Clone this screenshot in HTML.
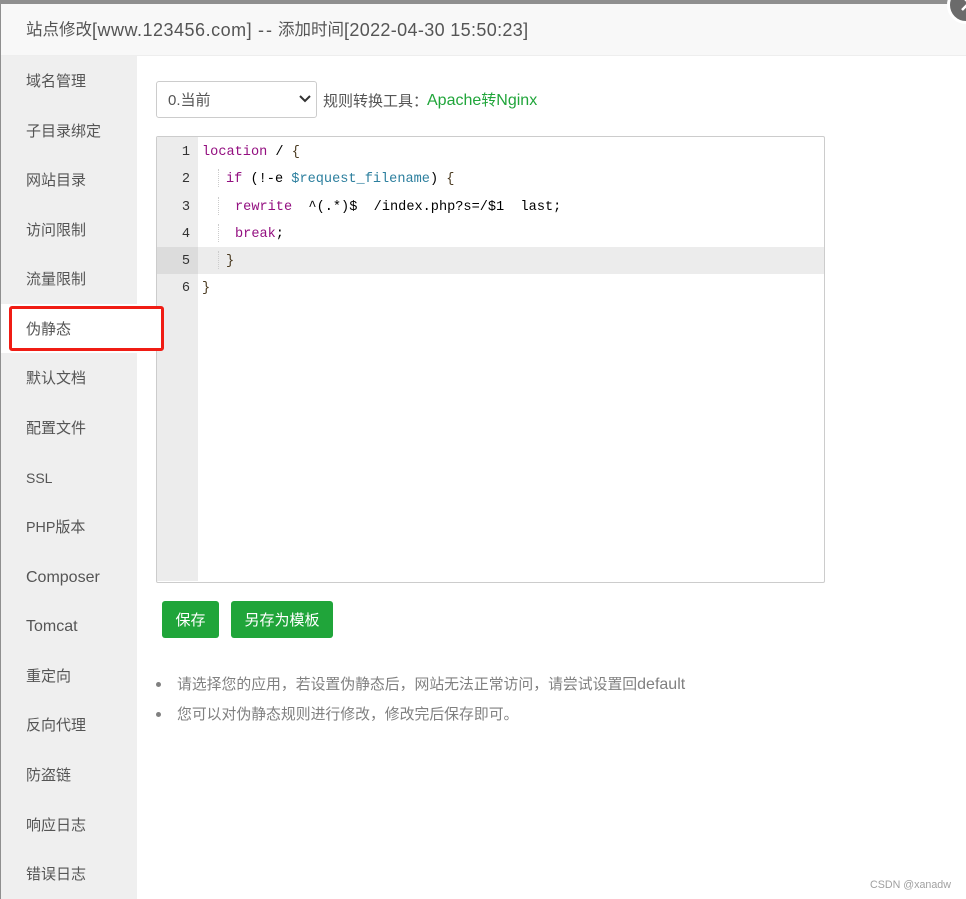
<!DOCTYPE html>
<html><head><meta charset="utf-8">
<style>
html,body{margin:0;padding:0;width:966px;height:899px;overflow:hidden;background:#fff;}
body{position:relative;font-family:"Liberation Sans","Noto Sans CJK SC",sans-serif;color:#555;}
.a{position:absolute;white-space:pre;}
.nav{position:absolute;left:26px;font-size:15px;line-height:20px;color:#555;white-space:pre;}
.code{position:absolute;font-family:"Liberation Mono",monospace;font-size:13.6px;line-height:20px;white-space:pre;color:#000;}
.ln{position:absolute;width:33px;left:157px;text-align:right;font-family:"Liberation Mono",monospace;font-size:13.6px;line-height:20px;color:#333;}
.k{color:#930f80}.v{color:#2c7f9e}.b{color:#4a3a20}
.guide{position:absolute;left:218px;width:0;border-left:1px dotted #ccc;}
.t{position:absolute;top:18px;font-size:16.5px;line-height:24px;color:#555;white-space:pre;}
.l{font-size:18px;letter-spacing:.5px;}
</style></head><body>
<div class="a" style="left:0;top:0;width:966px;height:4px;background:#8f8f8f"></div>
<div class="a" style="left:0;top:4px;width:1px;height:895px;background:#8f8f8f"></div>
<div class="a" style="left:1px;top:4px;width:965px;height:51px;background:#f8f8f8;border-bottom:1px solid #eee"></div>
<div class="t" style="left:26px">站点修改</div>
<div class="t l" style="left:92px">[www.123456.com]</div>
<div class="t l" style="left:258px;letter-spacing:2px">--</div>
<div class="t" style="left:278px">添加时间</div>
<div class="t l" style="left:344px;letter-spacing:.35px">[2022-04-30 15:50:23]</div>
<div class="a" style="left:947px;top:-14px;width:32px;height:32px;border-radius:50%;background:#6b6b6b;border:3px solid #fff;overflow:hidden;">
<svg width="32" height="32" style="position:absolute;left:0;top:0"><path d="M12 14 L19 21 L12 28" transform="translate(0,-7)" stroke="#fff" stroke-width="2.5" fill="none"/></svg></div>

<div class="a" style="left:1px;top:56px;width:136px;height:843px;background:#efefef"></div>
<div class="a" style="left:1px;top:304px;width:136px;height:49px;background:#fff"></div>

<div class="a" style="left:156px;top:81px;width:159px;height:35px;border:1px solid #ccc;border-radius:3px;background:#fff"></div>
<div class="a" style="left:168px;top:91px;font-size:15px;line-height:20px;color:#555">0.当前</div>
<svg class="a" style="left:298px;top:94px" width="14" height="10"><path d="M2 2 L7 7 L12 2" stroke="#333" stroke-width="2" fill="none"/></svg>
<div class="a" style="left:323px;top:92px;font-size:15px;line-height:20px;color:#555">规则转换工具：</div>
<div class="a" style="left:427px;top:91px;font-size:16px;line-height:20px;color:#20a53a">Apache<span style="font-size:15px">转</span>Nginx</div>

<div class="a" style="left:156px;top:136px;width:667px;height:445px;border:1px solid #ccc;border-radius:2px;background:#fff"></div>
<div class="a" style="left:157px;top:137px;width:41px;height:444px;background:#ececec"></div>
<div class="a" style="left:198px;top:247px;width:626px;height:27px;background:#ececec"></div>
<div class="a" style="left:157px;top:247px;width:41px;height:27px;background:#dcdcdc"></div>
<div class="guide" style="top:169px;height:18px"></div>
<div class="guide" style="top:197px;height:18px"></div>
<div class="guide" style="top:224px;height:18px"></div>
<div class="guide" style="top:251px;height:18px"></div>

<div class="ln" style="top:143px">1</div>
<div class="ln" style="top:170px">2</div>
<div class="ln" style="top:198px">3</div>
<div class="ln" style="top:225px">4</div>
<div class="ln" style="top:252px">5</div>
<div class="ln" style="top:279px">6</div>

<div class="code" style="left:202px;top:143px"><span class="k">location</span> / <span class="b">{</span></div>
<div class="code" style="left:226px;top:170px"><span class="k">if</span> (!-e <span class="v">$request_filename</span>) <span class="b">{</span></div>
<div class="code" style="left:235px;top:198px"><span class="k">rewrite</span>  ^(.*)$  /index.php?s=/$1  last;</div>
<div class="code" style="left:235px;top:225px"><span class="k">break</span>;</div>
<div class="code" style="left:226px;top:252px"><span class="b">}</span></div>
<div class="code" style="left:202px;top:279px"><span class="b">}</span></div>

<div class="a" style="left:162px;top:601px;width:57px;height:37px;background:#20a53a;border-radius:3px;color:#fff;font-size:15px;line-height:39px;text-align:center">保存</div>
<div class="a" style="left:231px;top:601px;width:102px;height:37px;background:#20a53a;border-radius:3px;color:#fff;font-size:15px;line-height:39px;text-align:center">另存为模板</div>

<div class="a" style="left:156px;top:682px;width:5px;height:5px;border-radius:50%;background:#808080"></div>
<div class="a" style="left:156px;top:712px;width:5px;height:5px;border-radius:50%;background:#808080"></div>
<div class="a" style="left:177px;top:675px;font-size:14.85px;line-height:20px;color:#808080">请选择您的应用，若设置伪静态后，网站无法正常访问，请尝试设置回<span style="font-size:16px">default</span></div>
<div class="a" style="left:177px;top:705px;font-size:14.85px;line-height:20px;color:#808080">您可以对伪静态规则进行修改，修改完后保存即可。</div>

<div class="a" style="left:870px;top:878px;font-size:10.7px;line-height:14px;color:#a0a0a0">CSDN @xanadw</div>

<div class="a" style="left:9px;top:306px;width:149px;height:39px;border:3px solid #f01c14;border-radius:3px;background:#fff"></div>

<div class="nav" style="top:72px">域名管理</div>
<div class="nav" style="top:122px">子目录绑定</div>
<div class="nav" style="top:171px">网站目录</div>
<div class="nav" style="top:221px">访问限制</div>
<div class="nav" style="top:270px">流量限制</div>
<div class="nav" style="top:320px">伪静态</div>
<div class="nav" style="top:369px">默认文档</div>
<div class="nav" style="top:419px">配置文件</div>
<div class="nav" style="top:468px;font-size:14px">SSL</div>
<div class="nav" style="top:518px"><span style="font-size:14.3px">PHP</span>版本</div>
<div class="nav" style="top:568px;font-size:16px">Composer</div>
<div class="nav" style="top:617px;font-size:16px">Tomcat</div>
<div class="nav" style="top:667px">重定向</div>
<div class="nav" style="top:716px">反向代理</div>
<div class="nav" style="top:766px">防盗链</div>
<div class="nav" style="top:816px">响应日志</div>
<div class="nav" style="top:865px">错误日志</div>
</body></html>
